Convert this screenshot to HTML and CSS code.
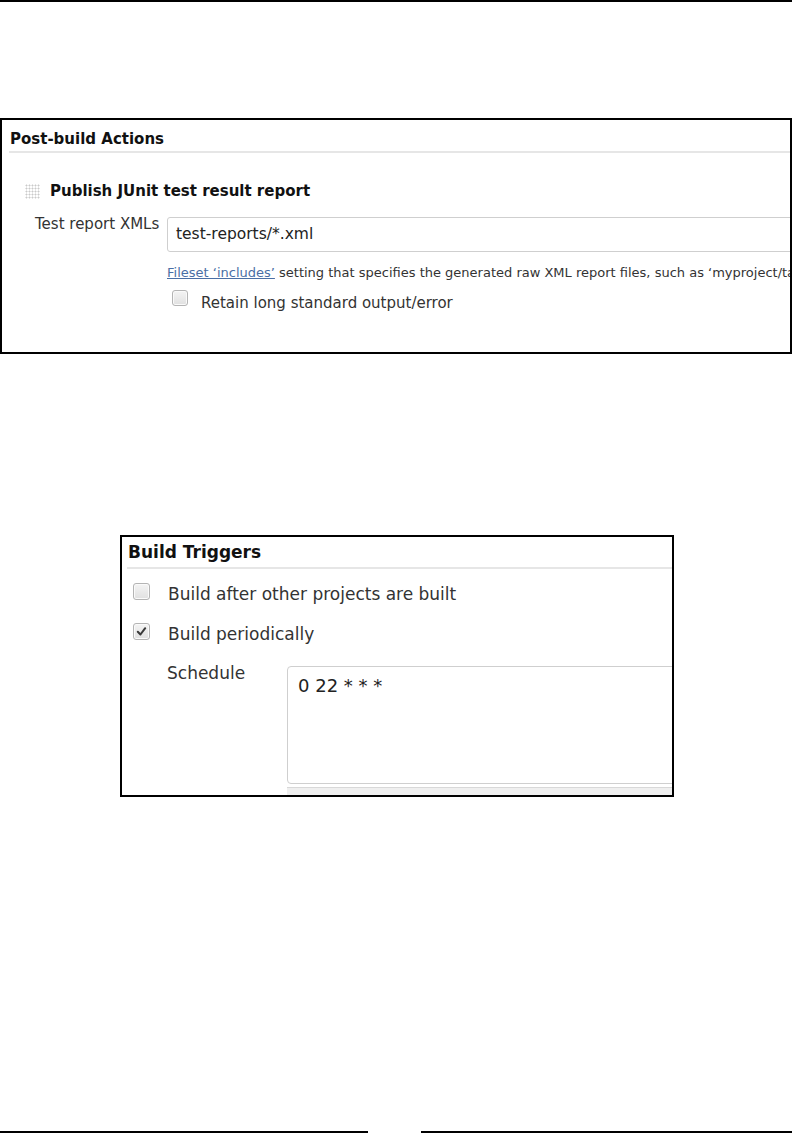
FILE: index.html
```html
<!DOCTYPE html>
<html>
<head>
<meta charset="utf-8">
<link rel="stylesheet" href="styles.css">
</head>
<body>
<div class="top-rule"></div>

<div class="fig fig1">
  <div class="sec-title">Post-build Actions</div>
  <div class="step-head">
    <span class="grip"></span>
    <span class="step-name">Publish JUnit test result report</span>
  </div>
  <div class="field-row">
    <div class="field-label">Test report XMLs</div>
    <div class="text-input">test-reports/*.xml</div>
  </div>
  <div class="help"><a class="help-link">Fileset ‘includes’</a> setting that specifies the generated raw XML report files, such as ‘myproject/target/test-reports/*.xml’.</div>
  <div class="check-row small">
    <span class="checkbox"></span>
    <span class="check-label">Retain long standard output/error</span>
  </div>
</div>

<div class="fig fig2">
  <div class="sec-title big">Build Triggers</div>
  <div class="check-row big first">
    <span class="checkbox big"></span>
    <span class="check-label">Build after other projects are built</span>
  </div>
  <div class="check-row big second">
    <span class="checkbox big"><svg viewBox="0 0 17 17" width="17" height="17"><path d="M4.3 8.8 L7.3 11.9 L12.7 4.8" fill="none" stroke="#3a3a3a" stroke-width="2.3" stroke-linecap="round" stroke-linejoin="round"/></svg></span>
    <span class="check-label">Build periodically</span>
  </div>
  <div class="sched-row">
    <div class="sched-label">Schedule</div>
    <div class="sched-col">
      <div class="textarea">0 22 * * *</div>
      <div class="resize-bar"></div>
    </div>
  </div>
</div>

<div class="footer">
  <div class="foot-line left"></div>
  <div class="foot-line right"></div>
</div>
</body>
</html>
```

FILE: styles.css
```css
* { box-sizing: border-box; }
html, body { margin: 0; padding: 0; background: #fff; }
body {
  width: 792px;
  height: 1142px;
  overflow: hidden;
  font-family: "DejaVu Sans", Verdana, sans-serif;
  color: #333;
}

.top-rule { border-top: 2px solid #000; }

.fig {
  border: 2px solid #000;
  overflow: hidden;
  background: #fff;
}

/* ---------- figure 1 ---------- */
.fig1 {
  margin-top: 116px;
  width: 792px;
  height: 236px;
}

.sec-title {
  margin: 10px 0 0 7px;
  padding: 0 0 3px 1px;
  border-bottom: 2px solid #e6e6e6;
  font-weight: bold;
  font-size: 15px;
  line-height: 18px;
  color: #111;
  white-space: nowrap;
}

.step-head {
  display: flex;
  align-items: center;
  margin: 29px 0 0 23px;
  height: 18px;
}
.grip {
  flex: none;
  width: 15px;
  height: 15px;
  background-image: radial-gradient(circle, #cacaca 0.9px, transparent 1.1px);
  background-size: 3px 3px;
  margin-right: 10px;
}
.step-name {
  font-weight: bold;
  font-size: 15px;
  line-height: 18px;
  color: #111;
  white-space: nowrap;
}

.field-row {
  display: flex;
  align-items: flex-start;
  margin-top: 17px;
}
.field-label {
  width: 165px;
  flex: none;
  padding-left: 33px;
  margin-top: -1px;
  font-size: 15px;
  line-height: 16px;
  white-space: nowrap;
}
.text-input {
  flex: 1;
  margin-right: -20px;
  height: 35px;
  border: 1px solid #cfcfcf;
  border-radius: 3px;
  padding: 0 0 0 8px;
  font-size: 15.5px;
  line-height: 32px;
  color: #222;
  white-space: nowrap;
}

.help {
  margin: 13px 0 0 165px;
  font-size: 13px;
  line-height: 16px;
  white-space: nowrap;
  color: #333;
}
.help-link {
  color: #4a6fa5;
  text-decoration: underline;
}

.check-row {
  display: flex;
  align-items: flex-start;
}
.check-row.small { margin: 9px 0 0 170px; }
.checkbox {
  flex: none;
  width: 16px;
  height: 16px;
  border: 1px solid #b4b4b4;
  border-radius: 3px;
  background: linear-gradient(#f4f4f4, #e0e0e0);
  box-shadow: inset 0 0 0 1px #fafafa;
}
.check-label {
  font-size: 15px;
  line-height: 18px;
  margin: 4px 0 0 13px;
  color: #333;
  white-space: nowrap;
}

/* ---------- figure 2 ---------- */
.fig2 {
  margin: 181px 0 0 120px;
  width: 554px;
  height: 262px;
}
.sec-title.big {
  margin: 5px 0 0 5px;
  padding: 0 0 5px 1px;
  font-size: 17px;
  line-height: 20px;
}
.check-row.big { margin-left: 11px; }
.check-row.big.first { margin-top: 14px; }
.check-row.big.second { margin-top: 19px; }
.checkbox.big {
  width: 17px;
  height: 17px;
  display: flex;
  align-items: center;
  justify-content: center;
}
.checkbox.big svg { display: block; }
.check-row.big .check-label {
  font-size: 17px;
  line-height: 20px;
  margin: 1px 0 0 18px;
}

.sched-row {
  display: flex;
  align-items: flex-start;
  margin-top: 22px;
}
.sched-label {
  width: 165px;
  flex: none;
  padding-left: 45px;
  font-size: 17px;
  line-height: 20px;
  margin-top: -3px;
}
.sched-col {
  flex: 1;
  margin-right: -20px;
}
.textarea {
  height: 118px;
  border: 1px solid #cfcfcf;
  border-radius: 4px;
  padding: 8px 0 0 10px;
  font-size: 18px;
  line-height: 22px;
  color: #222;
  white-space: nowrap;
}
.resize-bar {
  margin-top: 3px;
  height: 12px;
  border-top: 1px solid #d8d8d8;
  background: #efefef;
}

/* ---------- footer ---------- */
.footer {
  display: flex;
  justify-content: space-between;
  margin-top: 334px;
}
.foot-line { border-top: 2px solid #000; }
.foot-line.left { width: 368px; }
.foot-line.right { width: 371px; }
```
